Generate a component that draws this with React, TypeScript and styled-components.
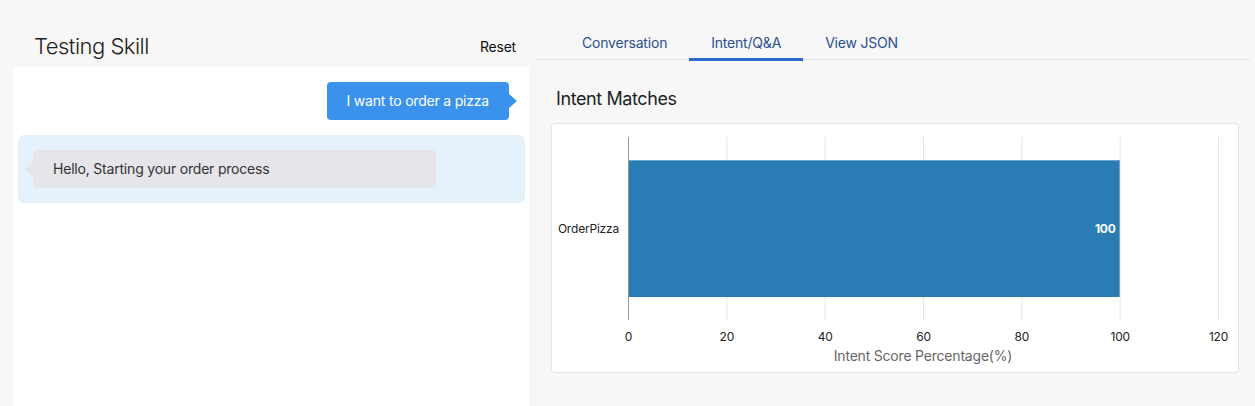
import React from 'react';
import styled, { createGlobalStyle } from 'styled-components';

const GlobalStyle = createGlobalStyle`
  body {
    margin: 0;
    background: #f7f7f7;
    font-family: Inter, "Noto Sans", sans-serif;
    color: #333;
    letter-spacing: -0.2px;
  }
`;

const Page = styled.div`
  display: flex;
  min-height: 406px;
`;

const ChatColumn = styled.div`
  width: 515px;
  margin-left: 14px;
  display: flex;
  flex-direction: column;
`;

const ChatHeader = styled.div`
  height: 42px;
  padding: 25px 13px 0 20px;
  display: flex;
  align-items: center;
  justify-content: space-between;
`;

const Title = styled.h1`
  margin: 0;
  font-size: 22px;
  font-weight: 300;
  color: #222;
  letter-spacing: -0.5px;
`;

const ResetButton = styled.button`
  border: none;
  background: none;
  padding: 0;
  font-family: inherit;
  letter-spacing: inherit;
  font-size: 14px;
  color: #111;
  cursor: pointer;
`;

const ChatBody = styled.div`
  flex: 1;
  background: #fff;
  padding: 15px 4px 20px;
  display: flex;
  flex-direction: column;
  gap: 15px;
`;

const UserRow = styled.div`
  display: flex;
  justify-content: flex-end;
  padding-right: 8px;
`;

const UserBubble = styled.div`
  position: relative;
  margin-right: 8px;
  padding: 0 20px;
  height: 38px;
  line-height: 38px;
  border-radius: 4px;
  background: #3a92ec;
  color: #fff;
  font-size: 14px;
  &::after {
    content: '';
    position: absolute;
    right: -8px;
    top: 12px;
    border-style: solid;
    border-width: 7px 0 7px 8px;
    border-color: transparent transparent transparent #3a92ec;
  }
`;

const BotGroup = styled.div`
  background: #e5f2fb;
  border-radius: 6px;
  padding: 15px;
`;

const BotBubble = styled.div`
  position: relative;
  width: 403px;
  box-sizing: border-box;
  padding: 0 20px;
  height: 38px;
  line-height: 38px;
  border-radius: 4px;
  background: #e6e5ea;
  color: #333;
  font-size: 14px;
  &::before {
    content: '';
    position: absolute;
    left: -8px;
    top: 12px;
    border-style: solid;
    border-width: 7px 8px 7px 0;
    border-color: transparent #e6e5ea transparent transparent;
  }
`;

const Inspector = styled.div`
  flex: 1;
  margin-left: 8px;
  margin-right: 5px;
  display: flex;
  flex-direction: column;
`;

const TabList = styled.div`
  display: flex;
  padding: 34px 0 0 23px;
  border-bottom: 1px solid #dde3ea;
`;

const Tab = styled.div<{ $active?: boolean }>`
  padding: 0 22px 6px;
  line-height: 18px;
  font-size: 14px;
  color: #2b4f8f;
  border-bottom: 3px solid ${(p) => (p.$active ? '#2d6bc9' : 'transparent')};
  margin-bottom: -2px;
  cursor: pointer;
`;

const Content = styled.div`
  padding: 0 11px 0 14px;
`;

const Heading = styled.h2`
  margin: 28px 0 13px 5px;
  font-size: 18px;
  line-height: 22px;
  font-weight: 400;
  color: #222;
  letter-spacing: -0.4px;
`;

const Card = styled.div`
  height: 248px;
  background: #fff;
  border: 1px solid #e1e4e8;
  border-radius: 4px;
`;

const ChartSvg = styled.svg`
  display: block;
  font-family: Inter, "Noto Sans", sans-serif;
`;

const intents = [{ name: 'OrderPizza', score: 100 }];

const IntentChart = () => {
  const left = 76;
  const right = 666;
  const top = 13;
  const bottom = 196;
  const max = 120;
  const scale = (v: number) => left + ((right - left) * v) / max;
  const ticks = [0, 20, 40, 60, 80, 100, 120];
  const band = (bottom - top) / intents.length;

  return (
    <ChartSvg width={686} height={248}>
      {ticks.map((t) => (
        <line key={t} x1={scale(t) + 0.5} x2={scale(t) + 0.5} y1={top} y2={bottom} stroke="#e6e6e6" />
      ))}
      {intents.map((it, i) => {
        const y = top + band * i + 23;
        const h = band - 46;
        const cy = y + h / 2;
        return (
          <g key={it.name}>
            <rect x={left} y={y} width={scale(it.score) - left} height={h} fill="#2a7db4" />
            <line x1={left} x2={scale(it.score)} y1={y + 0.5} y2={y + 0.5} stroke="#6aa8d4" />
            <text x={scale(it.score) - 4} y={cy} dy="0.35em" textAnchor="end" fontSize={12} fontWeight={700} fill="#fff">
              {it.score}
            </text>
            <text x={67} y={cy} dy="0.35em" textAnchor="end" fontSize={12} fill="#222">
              {it.name}
            </text>
          </g>
        );
      })}
      <line x1={left + 0.5} x2={left + 0.5} y1={top} y2={bottom} stroke="#999" />
      {ticks.map((t) => (
        <text key={t} x={scale(t) + 0.5} y={213} dy="0.35em" textAnchor="middle" fontSize={12} fill="#222">
          {t}
        </text>
      ))}
      <text x={(left + right) / 2} y={232} dy="0.35em" textAnchor="middle" fontSize={14} fill="#666">
        Intent Score Percentage(%)
      </text>
    </ChartSvg>
  );
};

const App = () => {
  return (
    <>
      <GlobalStyle />
      <Page>
        <ChatColumn>
          <ChatHeader>
            <Title>Testing Skill</Title>
            <ResetButton>Reset</ResetButton>
          </ChatHeader>
          <ChatBody>
            <UserRow>
              <UserBubble>I want to order a pizza</UserBubble>
            </UserRow>
            <BotGroup>
              <BotBubble>Hello, Starting your order process</BotBubble>
            </BotGroup>
          </ChatBody>
        </ChatColumn>
        <Inspector>
          <TabList>
            <Tab>Conversation</Tab>
            <Tab $active>Intent/Q&amp;A</Tab>
            <Tab>View JSON</Tab>
          </TabList>
          <Content>
            <Heading>Intent Matches</Heading>
            <Card>
              <IntentChart />
            </Card>
          </Content>
        </Inspector>
      </Page>
    </>
  );
};

export default App;
